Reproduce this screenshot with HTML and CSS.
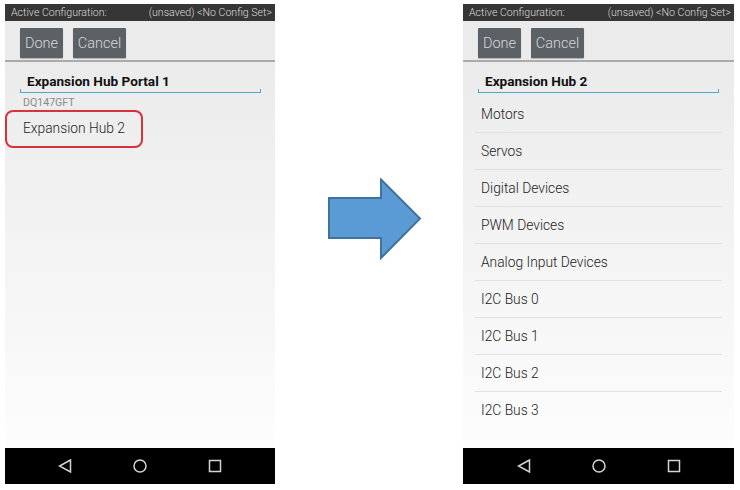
FILE: index.html
```html
<!DOCTYPE html>
<html>
<head>
<meta charset="utf-8">
<link rel="stylesheet" href="styles.css">
</head>
<body>
<div class="page">
  <div class="phone">
    <div class="status"><span>Active Configuration:</span><span>(unsaved) &lt;No Config Set&gt;</span></div>
    <div class="toolbar">
      <div class="btn btn-done">Done</div>
      <div class="btn btn-cancel">Cancel</div>
    </div>
    <div class="sep"></div>
    <div class="content">
      <div class="field">Expansion Hub Portal 1</div>
      <div class="serial">DQ147GFT</div>
      <div class="hub-item">Expansion Hub 2</div>
    </div>
    <div class="nav">
      <svg class="nav-icon" viewBox="0 0 14 14"><polygon points="12.5,1 1.5,7 12.5,13" /></svg>
      <svg class="nav-icon" viewBox="0 0 14 14"><circle cx="7" cy="7" r="6" /></svg>
      <svg class="nav-icon" viewBox="0 0 14 14"><rect x="1.5" y="1.5" width="11" height="11" /></svg>
    </div>
  </div>

  <div class="middle">
    <svg class="arrow" width="94" height="82" viewBox="0 0 94 82">
      <polygon points="1,20 53,20 53,1.5 92,40.5 53,80 53,60 1,60" />
    </svg>
  </div>

  <div class="phone phone-right">
    <div class="status"><span>Active Configuration:</span><span>(unsaved) &lt;No Config Set&gt;</span></div>
    <div class="toolbar">
      <div class="btn btn-done">Done</div>
      <div class="btn btn-cancel">Cancel</div>
    </div>
    <div class="sep"></div>
    <div class="content">
      <div class="field">Expansion Hub 2</div>
      <div class="list">
        <div class="row">Motors</div>
        <div class="row">Servos</div>
        <div class="row">Digital Devices</div>
        <div class="row">PWM Devices</div>
        <div class="row">Analog Input Devices</div>
        <div class="row">I2C Bus 0</div>
        <div class="row">I2C Bus 1</div>
        <div class="row">I2C Bus 2</div>
        <div class="row last">I2C Bus 3</div>
      </div>
    </div>
    <div class="nav">
      <svg class="nav-icon" viewBox="0 0 14 14"><polygon points="12.5,1 1.5,7 12.5,13" /></svg>
      <svg class="nav-icon" viewBox="0 0 14 14"><circle cx="7" cy="7" r="6" /></svg>
      <svg class="nav-icon" viewBox="0 0 14 14"><rect x="1.5" y="1.5" width="11" height="11" /></svg>
    </div>
  </div>
</div>
</body>
</html>
```

FILE: styles.css
```css
html, body {
  margin: 0;
  padding: 0;
  background: #ffffff;
  font-family: Roboto, "Liberation Sans", sans-serif;
}

.page {
  display: flex;
  align-items: flex-start;
  width: 740px;
  height: 490px;
}

.phone {
  margin-top: 4px;
  margin-left: 5px;
  width: 270px;
  height: 480px;
  display: flex;
  flex-direction: column;
  background: #ebebeb;
}

.phone-right {
  margin-left: 0;
  width: 271px;
}

.status {
  height: 17px;
  background: #363636;
  color: #dcdcdc;
  font-size: 10.6px;
  font-weight: 300;
  display: flex;
  align-items: center;
  justify-content: space-between;
  padding: 0 3px 0 6px;
}

.toolbar {
  height: 39px;
  box-sizing: border-box;
  padding: 7px 0 0 15px;
  display: flex;
  gap: 10px;
  background: #ebebeb;
}

.btn {
  height: 30px;
  background: #5b6165;
  color: #d6d8d9;
  font-size: 14.5px;
  font-weight: 300;
  display: flex;
  align-items: center;
  justify-content: center;
  border-radius: 1px;
  box-shadow: 0 1px 1px rgba(0, 0, 0, 0.25);
}

.btn-done { width: 43px; }
.btn-cancel { width: 53px; }

.sep {
  height: 2px;
  background: #ababab;
}

.content {
  flex: 1;
  background: linear-gradient(to bottom, #ebebeb 0%, #f3f3f3 45%, #fdfdfd 100%);
  display: flex;
  flex-direction: column;
}

.field {
  position: relative;
  margin: 11px 0 0 15px;
  width: 241px;
  box-sizing: border-box;
  padding: 0 0 2px 7px;
  font-size: 13.6px;
  line-height: 17px;
  font-weight: 700;
  color: #111;
  border-bottom: 1px solid #4fa8c6;
}

.field::before,
.field::after {
  content: "";
  position: absolute;
  bottom: -1px;
  width: 1px;
  height: 4px;
  background: #4fa8c6;
}

.field::before { left: 0; }
.field::after { right: 0; }

.serial {
  margin: 4px 0 0 18px;
  font-size: 10.6px;
  line-height: 12px;
  color: #8a8a8a;
}

.hub-item {
  margin-top: 1px;
  width: 138px;
  height: 38px;
  box-sizing: border-box;
  border: 2px solid #d8323c;
  border-radius: 8px;
  display: flex;
  align-items: center;
  padding: 0 0 2px 16px;
  font-size: 13.8px;
  font-weight: 300;
  color: #1e1e1e;
}

.list {
  margin-top: 3px;
  display: flex;
  flex-direction: column;
}

.row {
  height: 36px;
  margin: 0 12px;
  padding-left: 6px;
  display: flex;
  align-items: center;
  font-size: 13.8px;
  font-weight: 300;
  color: #222;
  border-bottom: 1px solid #e1e1e1;
}

.row.last { border-bottom: none; }

.nav {
  height: 36px;
  background: #000;
  display: flex;
  align-items: center;
  justify-content: center;
  gap: 61px;
}

.nav-icon {
  width: 14px;
  height: 14px;
  fill: none;
  stroke: #d4d4d4;
  stroke-width: 1.5;
}

.middle {
  width: 188px;
  display: flex;
}

.arrow {
  margin: 178px 0 0 53px;
}

.arrow polygon {
  fill: #5b9bd5;
  stroke: #41719c;
  stroke-width: 2;
  stroke-linejoin: miter;
}
```
